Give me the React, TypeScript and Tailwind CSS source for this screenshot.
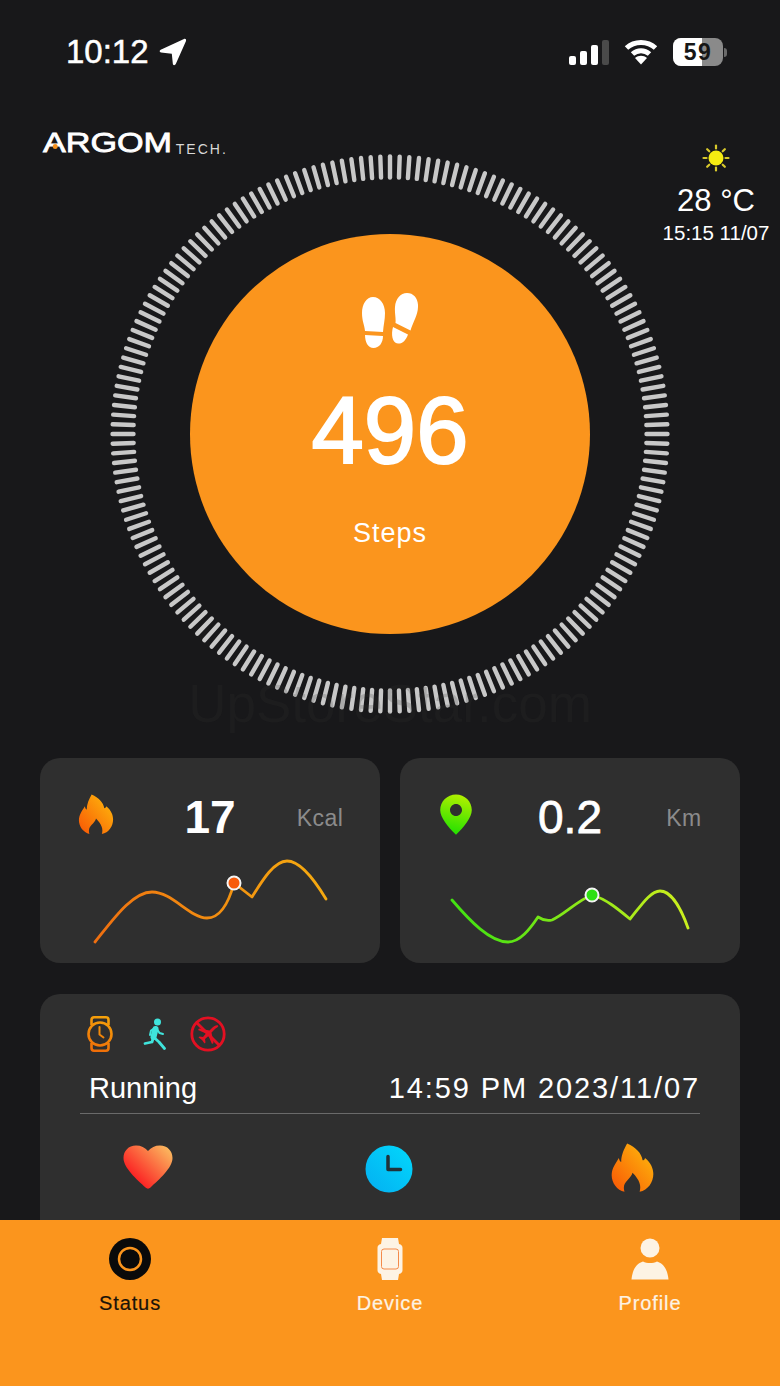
import { useId } from 'react';

const ticks = Array.from({ length: 180 }, (_, i) => i * 2);

function StepRing() {
  return (
    <svg viewBox="0 0 560 560" className="absolute left-[110px] top-[154px] h-[560px] w-[560px]">
      {ticks.map(deg => (
        <line
          key={deg}
          x1="280"
          y1="2.500"
          x2="280"
          y2="23.500"
          stroke="#c8c8c8"
          strokeWidth="4.400"
          strokeLinecap="round"
          transform={`rotate(${deg} 280 280)`}
        />
      ))}
    </svg>
  );
}

function Footprints() {
  return (
    <svg viewBox="0 0 56 55" className="h-[55px] w-[56px]" fill="white">
      <path d="M11 4C18 4 23 11 23 20C23 27 21.500 32 21 39L3 38C2.500 32 0 28 0 20C0 11 4.500 4 11 4Z" />
      <path d="M3 42L21 43C21 50 17 55 11.500 55C6 55 3 49 3 42Z" />
      <path d="M45 0C52 0 56.500 6 56 14C55.800 22 51.500 28 48.500 37.500L33.500 30C34 25 32.500 20 33 14C33.500 6 38.500 0 45 0Z" />
      <path d="M31 34L46 41.500C44 47.500 40 51 36 50.500C30 50 29 41 31 34Z" />
    </svg>
  );
}

function Flame({ className }: { className: string }) {
  const id = useId();
  return (
    <svg viewBox="0 0 36 42" className={className}>
      <defs>
        <linearGradient id={id} x1="0.1" y1="0.9" x2="0.8" y2="0.2">
          <stop offset="0" stopColor="#f95f06" />
          <stop offset="1" stopColor="#fdaa0b" />
        </linearGradient>
      </defs>
      <path
        fill={`url(#${id})`}
        d="M13.500 0.500C21 4 25.500 8.500 26.500 14.500C27.500 14.500 28.500 13.500 28.500 12.500C33.500 16.500 35.500 21.500 35.500 26C35.500 33 31 39.500 24 41C25.500 36 24 31 18 25C17 29 12.500 31.500 11 35.500C10.500 37.500 10.800 39.500 11.300 41C5 39.500 0.500 33.500 0.500 27C0.500 21 4 17 6.500 12.500C7 14.500 7.500 15.500 8.500 16C8.500 10 11 5 13.500 0.500Z"
      />
    </svg>
  );
}

function Pin() {
  const id = useId();
  return (
    <svg viewBox="0 0 32 41" className="h-[41px] w-[32px]">
      <defs>
        <linearGradient id={id} x1="0.5" y1="1" x2="0.7" y2="0">
          <stop offset="0" stopColor="#22e000" />
          <stop offset="1" stopColor="#b5f000" />
        </linearGradient>
      </defs>
      <path
        fillRule="evenodd"
        fill={`url(#${id})`}
        d="M16 0.500C24.800 0.500 31.800 7.500 31.800 16C31.800 23.500 24 33 16 40.800C8 33 0.200 23.500 0.200 16C0.200 7.500 7.200 0.500 16 0.500ZM16 10C12.700 10 10 12.700 10 16C10 19.300 12.700 22 16 22C19.300 22 22 19.300 22 16C22 12.700 19.300 10 16 10Z"
      />
    </svg>
  );
}

function Heart() {
  const id = useId();
  return (
    <svg viewBox="0 0 50 44" className="h-[44px] w-[50px]">
      <defs>
        <linearGradient id={id} x1="0.1" y1="0.8" x2="0.9" y2="0.1">
          <stop offset="0" stopColor="#fb0f1c" />
          <stop offset="1" stopColor="#fbb25c" />
        </linearGradient>
      </defs>
      <path
        fill={`url(#${id})`}
        d="M13 0.500C18 0.500 22 2.500 25 6C28 2.500 32 0.500 37 0.500C44.500 0.500 49.500 6 49.500 13C49.500 23 36 34.500 27.500 42.500C26 44 24 44 22.500 42.500C14 34.500 0.500 23 0.500 13C0.500 6 5.500 0.500 13 0.500Z"
      />
    </svg>
  );
}

function Clock() {
  const id = useId();
  return (
    <svg viewBox="0 0 48 48" className="h-[48px] w-[48px]">
      <defs>
        <linearGradient id={id} x1="0.1" y1="0.9" x2="0.9" y2="0.1">
          <stop offset="0" stopColor="#04b3f2" />
          <stop offset="1" stopColor="#02d4fb" />
        </linearGradient>
      </defs>
      <circle cx="24" cy="24" r="23.500" fill={`url(#${id})`} />
      <path d="M23 11.500V24.500H35.500" fill="none" stroke="#21323a" strokeWidth="3.500" strokeLinecap="round" strokeLinejoin="round" />
    </svg>
  );
}

function WatchIcon() {
  const id = useId();
  return (
    <svg viewBox="0 0 26 36" className="h-[36px] w-[26px]" fill="none">
      <defs>
        <linearGradient id={id} gradientUnits="userSpaceOnUse" x1="4" y1="36" x2="16" y2="0">
          <stop offset="0" stopColor="#ee6a08" />
          <stop offset="1" stopColor="#f6a20a" />
        </linearGradient>
      </defs>
      <g stroke={`url(#${id})`} strokeWidth="2.600">
        <circle cx="13" cy="18" r="11.500" />
        <path d="M4.500 9V4C4.500 2.300 5.500 1.300 7 1.300H19C20.500 1.300 21.500 2.300 21.500 4V9" />
        <path d="M4.500 27V32C4.500 33.700 5.500 34.700 7 34.700H19C20.500 34.700 21.500 33.700 21.500 32V27" />
        <path d="M12.500 11V18.500L16.500 21.500" strokeWidth="2" strokeLinecap="round" strokeLinejoin="round" />
      </g>
    </svg>
  );
}

function Runner() {
  return (
    <svg viewBox="0 0 24 32" className="h-[32px] w-[24px]" fill="none" stroke="#3fe4dc" strokeLinecap="round" strokeLinejoin="round">
      <circle cx="14.500" cy="4" r="3.500" fill="#3fe4dc" stroke="none" />
      <path d="M12.500 11L10.500 19" strokeWidth="6" />
      <path d="M11 10.500L8 12.500L7 17" strokeWidth="2" />
      <path d="M14 11L16.500 15L20 16" strokeWidth="2" />
      <path d="M10.500 19L9 24L2 25.500" strokeWidth="2.800" />
      <path d="M11 19.500L16 24L21.500 30.500" strokeWidth="2.800" />
    </svg>
  );
}

function NoFlight() {
  return (
    <svg viewBox="0 0 36 36" className="h-[36px] w-[36px]">
      <circle cx="18" cy="18" r="16.200" fill="none" stroke="#e31022" strokeWidth="2.800" />
      <path d="M6.500 6.500L29.500 29.500" stroke="#e31022" strokeWidth="2.800" />
      <path
        fill="#e31022"
        d="M28 9.500C26.500 8.500 24 10 22.500 11.500L19.500 14.500L9 12.500L8 14L16 17.500L13 21L9.500 20.500L8.500 21.500L12 24L14.500 27.500L15.500 26.500L15 23L18.500 20L22 28L23.500 27L21.500 16.500L25 13C26.500 11.500 29 11 28 9.500Z"
      />
    </svg>
  );
}

function Sun() {
  return (
    <svg viewBox="0 0 28 28" className="h-[28px] w-[28px]">
      {[0, 45, 90, 135, 180, 225, 270, 315].map(deg => (
        <line key={deg} x1="14" y1="1.500" x2="14" y2="4.500" stroke="#d8c92c" strokeWidth="2.200" strokeLinecap="round" transform={`rotate(${deg} 14 14)`} />
      ))}
      <circle cx="14" cy="14" r="7.500" fill="#f6ec12" />
    </svg>
  );
}

function StatusBar() {
  return (
    <div className="flex h-[102px] items-start justify-between pl-[66px] pr-[53px] pt-[33px] text-white">
      <div className="flex items-center gap-[10px]">
        <span className="text-[33px] leading-[38px] [-webkit-text-stroke:0.5px_white]">10:12</span>
        <svg viewBox="0 0 28 28" className="h-[28px] w-[28px]" fill="white">
          <path d="M25 1C26.500 0.500 27.500 1.500 27 3L17 25.500C16 27.800 14 27.800 13.800 25.500L12.800 15.800L2 14.500C0.300 14.200 0.200 12.500 1.700 11.800Z" />
        </svg>
      </div>
      <div className="flex items-center gap-[15px] pt-[5px]">
        <div className="flex h-[25px] items-end gap-[4px]">
          <span className="h-[9px] w-[7px] rounded-[2px] bg-white" />
          <span className="h-[14px] w-[7px] rounded-[2px] bg-white" />
          <span className="h-[20px] w-[7px] rounded-[2px] bg-white" />
          <span className="h-[25px] w-[7px] rounded-[2px] bg-[#4a4a4a]" />
        </div>
        <svg viewBox="0 0 34 26" className="h-[26px] w-[34px]" fill="none" stroke="white" strokeWidth="5">
          <path d="M2.500 9C10.500 1.500 23.500 1.500 31.500 9" />
          <path d="M8.500 15C13.500 10.500 20.500 10.500 25.500 15" />
          <path fill="white" stroke="none" d="M17 25.500L11 19C14.500 16 19.500 16 23 19Z" />
        </svg>
        <div className="flex items-center gap-[1px]">
          <div className="relative flex h-[28px] w-[50px] items-center justify-center overflow-hidden rounded-[8px] bg-[#8a8a8a]">
            <div className="absolute inset-y-0 left-0 w-[29px] bg-white" />
            <span className="relative text-[23px] font-bold leading-none tracking-[1.5px] text-[#161616]">59</span>
          </div>
          <div className="h-[9px] w-[3px] rounded-r-full bg-[#6a6a6a]" />
        </div>
      </div>
    </div>
  );
}

function Logo() {
  return (
    <div className="absolute left-[43px] top-[127px] flex items-end text-white">
      <span className="relative origin-left whitespace-nowrap text-[28px] leading-[32px] [-webkit-text-stroke:0.8px_white] [transform:scaleX(1.22)]">
        ARGOM
        <span className="absolute left-[8px] top-[17px] h-[5px] w-[4px] rounded-full bg-[#f5901e]" />
      </span>
      <span className="ml-[27px] pb-[3px] text-[14px] leading-[14px] tracking-[2px] text-[#d8d8d8]">TECH.</span>
    </div>
  );
}

function Weather() {
  return (
    <div className="absolute left-[656px] top-[144px] flex w-[120px] flex-col items-center text-white">
      <Sun />
      <span className="mt-[12px] text-[31px] leading-[34px]">28 °C</span>
      <span className="mt-[1px] text-[20.500px] leading-[27px]">15:15 11/07</span>
    </div>
  );
}

function Hero() {
  return (
    <div className="relative flex h-[656px] flex-col items-center">
      <div className="flex h-[400px] w-[400px] translate-y-[132px] flex-col items-center rounded-full bg-[#fb951d] text-white">
        <div className="mt-[59px]">
          <Footprints />
        </div>
        <span className="mt-[35px] text-[94px] leading-[96px] [-webkit-text-stroke:2px_white]">496</span>
        <span className="mt-[37px] text-[27px] leading-[34px] tracking-[1px]">Steps</span>
      </div>
      <div className="absolute left-0 top-[572px] w-full text-center text-[53px] leading-[60px] text-[#303030]/20">UpStoreStar.com</div>
    </div>
  );
}

function Sparkline({ d, from, to, dotX, dotY, dot }: { d: string; from: string; to: string; dotX: number; dotY: number; dot: string }) {
  const id = useId();
  return (
    <svg viewBox="0 0 340 110" className="h-[110px] w-full shrink-0" fill="none">
      <defs>
        <linearGradient id={id} gradientUnits="userSpaceOnUse" x1="40" y1="100" x2="300" y2="0">
          <stop offset="0" stopColor={from} />
          <stop offset="1" stopColor={to} />
        </linearGradient>
      </defs>
      <path d={d} stroke={`url(#${id})`} strokeWidth="2.800" strokeLinecap="round" strokeLinejoin="round" />
      <circle cx={dotX} cy={dotY} r="6.500" fill={dot} stroke="#f4f4f4" strokeWidth="2" />
    </svg>
  );
}

function MetricCard({ icon, value, unit, chart, bold, unitClass }: { icon: React.ReactNode; value: string; unit: string; chart: React.ReactNode; bold?: boolean; unitClass?: string }) {
  return (
    <div className="flex h-[205px] flex-col overflow-hidden rounded-[20px] bg-[#2f2f2f]">
      <div className="flex h-[95px] shrink-0 items-center pt-[24px]">
        <div className="flex w-[112px] justify-center pb-[6px]">{icon}</div>
        <span className={`w-[116px] pb-[1px] text-center text-[46px] leading-[52px] text-white ${bold ? 'font-bold' : '[-webkit-text-stroke:0.8px_white]'}`}>{value}</span>
        <span className={`flex-1 text-center text-[23px] leading-[28px] tracking-[0.5px] text-[#8b8b8b] ${unitClass ?? ''}`}>{unit}</span>
      </div>
      {chart}
    </div>
  );
}

function TabItem({ label, icon, active }: { label: string; icon: React.ReactNode; active?: boolean }) {
  const tone = active ? 'text-[#1a1208] [-webkit-text-stroke:0.2px_#1a1208]' : 'text-[#fdf3e4] [-webkit-text-stroke:0.2px_#fdf3e4]';
  return (
    <div className={`flex w-[260px] flex-col items-center ${tone}`}>
      <div className="flex h-[42px] items-center justify-center">{icon}</div>
      <span className="mt-[10px] text-[20px] leading-[26px] tracking-[0.9px]">{label}</span>
    </div>
  );
}

export default function App() {
  return (
    <div className="relative flex h-[1386px] w-[780px] flex-col overflow-hidden bg-[#18181a] font-['Liberation_Sans',Arial,sans-serif]">
      <StatusBar />
      <StepRing />
      <Logo />
      <Weather />
      <Hero />

      <div className="grid grid-cols-2 gap-[20px] px-[40px]">
        <MetricCard
          icon={<Flame className="h-[41px] w-[36px]" />}
          value="17"
          unit="Kcal"
          unitClass="pr-[8px]"
          bold
          chart={
            <Sparkline
              d="M55 89C72 68 92 39 112 39C132 39 150 65 167 65C182 65 190 45 194 30L212 44C222 28 234 8 247 8C260 8 274 26 286 46"
              from="#ee6a10"
              to="#f6b010"
              dotX={194}
              dotY={30}
              dot="#f75a0a"
            />
          }
        />
        <MetricCard
          icon={<Pin />}
          value="0.2"
          unit="Km"
          chart={
            <Sparkline
              d="M52 47C70 68 90 89 108 89C120 89 130 76 138 64C144 68 148 68 152 67C164 62 178 47 192 42C206 46 218 56 230 66C240 54 250 38 260 38C272 38 282 58 288 75"
              from="#30e010"
              to="#e0f020"
              dotX={192}
              dotY={42}
              dot="#2ee012"
            />
          }
        />
      </div>

      <div className="mx-[40px] mt-[31px] flex flex-1 flex-col overflow-hidden rounded-t-[20px] bg-[#2f2f2f]">
        <div className="flex h-[80px] items-center pb-[1px] pl-[47px]">
          <WatchIcon />
          <div className="ml-[30px]">
            <Runner />
          </div>
          <div className="ml-[23px]">
            <NoFlight />
          </div>
        </div>
        <div className="mx-[40px] flex h-[40px] items-start justify-between border-b border-[#6a6a6a] pl-[9px] text-white">
          <span className="text-[29px] leading-[28px]">Running</span>
          <span className="text-[29px] leading-[28px] tracking-[1.9px]">14:59 PM 2023/11/07</span>
        </div>
        <div className="flex items-start pt-[31px]">
          <div className="flex w-[133px] justify-end">
            <Heart />
          </div>
          <div className="ml-[192px]">
            <Clock />
          </div>
          <div className="ml-[197px]">
            <Flame className="h-[50px] w-[45px] -translate-y-[2px]" />
          </div>
        </div>
      </div>

      <div className="flex h-[166px] shrink-0 bg-[#fb951d] pt-[18px]">
        <TabItem
          active
          label="Status"
          icon={
            <svg viewBox="0 0 42 42" className="h-[42px] w-[42px]">
              <circle cx="21" cy="21" r="21" fill="#0a0a0a" />
              <circle cx="21" cy="21" r="11" fill="#0a0a0a" stroke="#fb951d" strokeWidth="2.500" />
            </svg>
          }
        />
        <TabItem
          label="Device"
          icon={
            <svg viewBox="0 0 26 42" className="h-[42px] w-[26px]">
              <path fill="#fdf3e4" d="M5 0H21L22 6C24.500 6.500 25.500 8 25.500 10V32C25.500 34 24.500 35.500 22 36L21 42H5L4 36C1.500 35.500 0.500 34 0.500 32V10C0.500 8 1.500 6.500 4 6Z" />
              <rect x="4.500" y="11" width="17" height="20" rx="2.500" fill="#fdf3e4" stroke="#f48a4a" strokeWidth="1" />
            </svg>
          }
        />
        <TabItem
          label="Profile"
          icon={
            <svg viewBox="0 0 38 42" className="h-[42px] w-[38px]">
              <circle cx="19" cy="10" r="9.500" fill="#fdf3e4" />
              <path fill="#fdf3e4" d="M0.500 41.500C1.500 32 5 25.500 12 23.500C16 25.500 22 25.500 26 23.500C33 25.500 36.500 32 37.500 41.500Z" />
            </svg>
          }
        />
      </div>
    </div>
  );
}
